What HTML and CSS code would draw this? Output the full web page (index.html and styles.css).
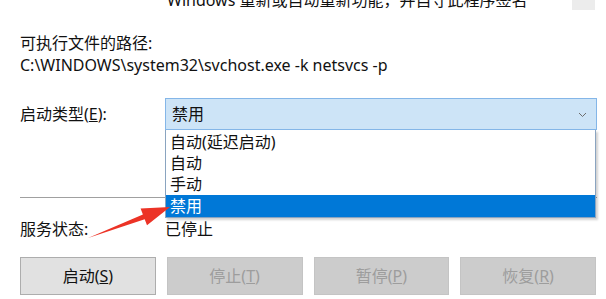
FILE: index.html
```html
<!DOCTYPE html>
<html lang="zh-CN">
<head>
  <meta charset="UTF-8">
  <title>服务属性</title>
  <link rel="stylesheet" href="styles.css">
</head>
<body>
  <div class="dialog">
    <div class="row">
      <div class="label"></div>
      <div class="desc">
        <span class="desc-text">Windows 重新或自动重新功能，并自守此程序签名</span>
        <span class="desc-scroll"></span>
      </div>
    </div>

    <div class="path-label">可执行文件的路径:</div>
    <div class="path">C:\WINDOWS\system32\svchost.exe -k netsvcs -p</div>

    <div class="row startup">
      <div class="label">启动类型(<u>E</u>):</div>
      <div class="combo-wrap">
        <div class="combo">
          <span>禁用</span>
          <svg class="chevron" width="9" height="6" viewBox="0 0 9 6">
            <polyline points="1,1 4.5,4.5 8,1" fill="none" stroke="#6d6d6d" stroke-width="1"/>
          </svg>
        </div>
        <ul class="dropdown">
          <li>自动(延迟启动)</li>
          <li>自动</li>
          <li>手动</li>
          <li class="selected">禁用</li>
        </ul>
      </div>
    </div>

    <hr class="sep">

    <div class="row status">
      <div class="label">服务状态:</div>
      <div>已停止</div>
    </div>

    <div class="buttons">
      <button class="btn">启动(<u>S</u>)</button>
      <button class="btn" disabled>停止(<u>T</u>)</button>
      <button class="btn" disabled>暂停(<u>P</u>)</button>
      <button class="btn" disabled>恢复(<u>R</u>)</button>
    </div>
  </div>

  <!-- annotation arrow pointing at the selected item -->
  <svg class="arrow" width="606" height="299" viewBox="0 0 606 299">
    <polygon points="88,238 142.9,214.6 140.6,208.5 170,207 147,225.3 144.7,219.2" fill="#ec3326"/>
  </svg>
</body>
</html>
```

FILE: styles.css
```css
body {
  margin: 0;
  background: #fff;
  color: #111;
  font-family: "Noto Sans", "Noto Sans CJK SC", sans-serif;
  font-size: 16px;
  line-height: 22px;
  overflow: hidden;
  position: relative;
}
.dialog {
  padding: 0 9px 0 20px;
}
.row {
  display: flex;
  align-items: center;
}
.label {
  width: 145px;
  flex: none;
}
.desc {
  flex: 1;
  height: 10px;
  overflow: hidden;
  display: flex;
  align-items: flex-end;
  justify-content: space-between;
  line-height: 20px;
}
.desc-text {
  padding-left: 2px;
  white-space: nowrap;
}
.desc-scroll {
  width: 23px;
  height: 10px;
  background: #ececec;
  margin-right: 2px;
}
.path-label {
  margin-top: 22px;
}
.startup {
  margin-top: 22px;
}
.combo-wrap {
  flex: 1;
  position: relative;
}
.combo {
  height: 30px;
  border: 1px solid #84b6e8;
  background: #cde4f7;
  display: flex;
  align-items: center;
  justify-content: space-between;
  padding: 0 9px 0 6px;
}
.chevron {
  margin-top: 1px;
}
.dropdown {
  position: absolute;
  top: 100%;
  left: 0;
  right: 1px;
  margin: 0;
  padding: 2px 0 0;
  list-style: none;
  background: #fff;
  border: 1px solid #8aa4c0;
  border-top: none;
  box-shadow: 2px 2px 2px rgba(0, 0, 0, 0.18);
  z-index: 2;
}
.dropdown li {
  height: 21px;
  line-height: 21px;
  padding-left: 4px;
}
.dropdown .selected {
  background: #0078d7;
  color: #fff;
  height: 22px;
  line-height: 22px;
}
.sep {
  margin: 67px 0 0;
  border: none;
  border-top: 1px solid #a0a0a0;
  height: 0;
}
.status {
  margin-top: 20px;
}
.buttons {
  display: grid;
  grid-template-columns: repeat(4, 1fr);
  column-gap: 11px;
  margin-top: 17px;
  padding-right: 1px;
}
.btn {
  height: 38px;
  font: inherit;
  color: #111;
  background: #e1e1e1;
  border: 1px solid #adadad;
  padding: 0;
}
.btn:disabled {
  background: #cccccc;
  border-color: #c4c4c4;
  color: #9d9d9d;
}
.arrow {
  position: absolute;
  top: 0;
  left: 0;
  z-index: 5;
  pointer-events: none;
}
```
